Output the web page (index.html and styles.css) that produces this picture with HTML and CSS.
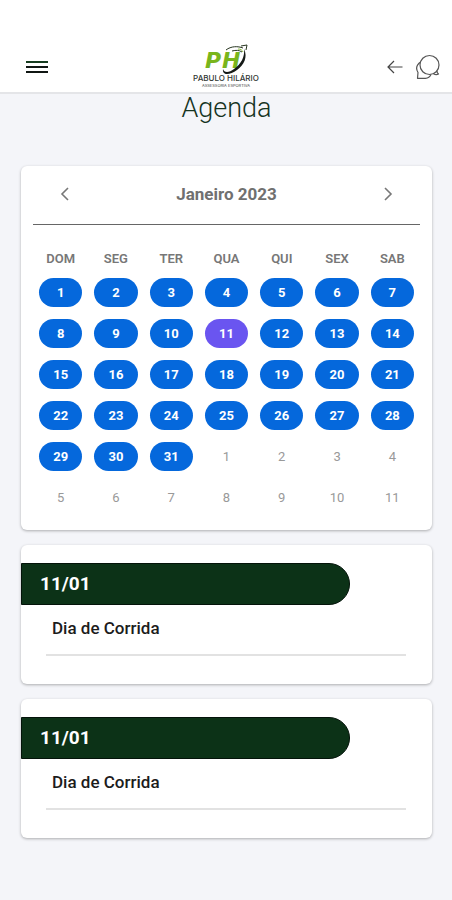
FILE: index.html
```html
<!DOCTYPE html>
<html lang="pt-BR">
<head>
<meta charset="utf-8">
<meta name="viewport" content="width=device-width, initial-scale=1">
<title>Agenda</title>
<link rel="stylesheet" href="styles.css">
</head>
<body>
<header class="topbar">
  <div class="topbar-side">
    <button class="icon-button" type="button" aria-label="Menu">
      <svg width="22" height="14" viewBox="0 0 22 14" fill="none" stroke-width="2"><path d="M0 2h22" stroke="#173d20"/><path d="M0 7h22M0 12h22" stroke="#101613"/></svg>
    </button>
  </div>
  <a class="logo" href="#" aria-label="Pabulo Hilário">
    <svg width="70" height="46" viewBox="0 0 70 46">
      <g class="logo-mark"><text x="14" y="24">P</text><text x="31" y="24">H</text></g>
      <path d="M32 25c1 4 6 4 11 0 7-5 11-12 10-20 4 8 0 16-7 21-7 5-15 6-14-1z" fill="#151a17"/>
      <path d="M35 6c5-4 12-4 17-2M41 7c4-1 7-1 10 1M50 2l6-1-1 5" fill="none" stroke="#27351f" stroke-width="1"/>
      <path d="M47 5c3 0 4 1 5 3" fill="none" stroke="#8bbd3b"/>
      <text class="logo-name" x="35" y="37" text-anchor="middle">PABULO HILÁRIO</text>
      <text class="logo-tag" x="35" y="43" text-anchor="middle">ASSESSORIA ESPORTIVA</text>
    </svg>
  </a>
  <div class="topbar-side topbar-actions">
    <button class="icon-button" type="button" aria-label="Voltar">
      <svg width="16" height="14" viewBox="0 0 16 14" fill="none" stroke="#444" stroke-width="1.2"><path d="M15.500 7H1M7 1L1 7l6 6"/></svg>
    </button>
    <button class="icon-button" type="button" aria-label="Mensagens">
      <svg width="26" height="26" viewBox="0 0 26 26" fill="none" stroke="#555" stroke-width="1.2" stroke-linejoin="round"><circle cx="14.500" cy="11" r="9.500"/><path d="M18.500 19.700c1.500 1 3.500 1.200 5 .3-1.200-.8-1.700-1.800-1.400-3.200M5.500 8C1.500 11 .8 15 3 18.500L2.500 24.300h8c2 0 4.500-1.500 5.500-3.700"/></svg>
    </button>
  </div>
</header>
<main class="page">
  <h1 class="title">Agenda</h1>
  <section class="card calendar" aria-label="Calendário">
    <div class="month-bar">
      <button class="icon-button" type="button" aria-label="Mês anterior"><svg width="10" height="14" viewBox="0 0 10 14" fill="none" stroke="#777" stroke-width="1.600"><path d="M8 1L2 7l6 6"/></svg></button>
      <h2 class="month">Janeiro 2023</h2>
      <button class="icon-button" type="button" aria-label="Próximo mês"><svg width="10" height="14" viewBox="0 0 10 14" fill="none" stroke="#777" stroke-width="1.600"><path d="M2 1l6 6-6 6"/></svg></button>
    </div>
    <table class="days">
      <thead><tr><th>DOM</th><th>SEG</th><th>TER</th><th>QUA</th><th>QUI</th><th>SEX</th><th>SAB</th></tr></thead>
      <tbody>
        <tr><td><button class="day">1</button></td><td><button class="day">2</button></td><td><button class="day">3</button></td><td><button class="day">4</button></td><td><button class="day">5</button></td><td><button class="day">6</button></td><td><button class="day">7</button></td></tr>
        <tr><td><button class="day">8</button></td><td><button class="day">9</button></td><td><button class="day">10</button></td><td><button class="day today" aria-current="date">11</button></td><td><button class="day">12</button></td><td><button class="day">13</button></td><td><button class="day">14</button></td></tr>
        <tr><td><button class="day">15</button></td><td><button class="day">16</button></td><td><button class="day">17</button></td><td><button class="day">18</button></td><td><button class="day">19</button></td><td><button class="day">20</button></td><td><button class="day">21</button></td></tr>
        <tr><td><button class="day">22</button></td><td><button class="day">23</button></td><td><button class="day">24</button></td><td><button class="day">25</button></td><td><button class="day">26</button></td><td><button class="day">27</button></td><td><button class="day">28</button></td></tr>
        <tr><td><button class="day">29</button></td><td><button class="day">30</button></td><td><button class="day">31</button></td><td><button class="day other">1</button></td><td><button class="day other">2</button></td><td><button class="day other">3</button></td><td><button class="day other">4</button></td></tr>
        <tr><td><button class="day other">5</button></td><td><button class="day other">6</button></td><td><button class="day other">7</button></td><td><button class="day other">8</button></td><td><button class="day other">9</button></td><td><button class="day other">10</button></td><td><button class="day other">11</button></td></tr>
      </tbody>
    </table>
  </section>
  <article class="card event">
    <h2 class="event-date">11/01</h2>
    <p class="event-name">Dia de Corrida</p>
  </article>
  <article class="card event">
    <h2 class="event-date">11/01</h2>
    <p class="event-name">Dia de Corrida</p>
  </article>
</main>
</body>
</html>
```
FILE: styles.css
```css
* {
  box-sizing: border-box;
}

body {
  margin: 0;
  background: #f4f5f9;
  color: #1c1c1c;
  font-family: Roboto, "Liberation Sans", sans-serif;
}

h1, h2, p {
  margin: 0;
}

button {
  padding: 0;
  border: 0;
  background: none;
  font-family: inherit;
  cursor: pointer;
}

.icon-button {
  display: flex;
  align-items: center;
  justify-content: center;
}

.topbar {
  display: grid;
  grid-template-columns: 1fr auto 1fr;
  align-items: center;
  padding: 44px 11px 2px;
  background: #fff;
  border-bottom: 2px solid #e4e5e8;
}

.topbar-side {
  display: flex;
  align-items: center;
  padding-left: 15px;
}

.topbar-actions {
  justify-content: flex-end;
  gap: 12px;
}

.logo {
  display: flex;
}

.logo-mark {
  font: italic 700 22px "DejaVu Sans", sans-serif;
  fill: #79b51c;
}

.logo-name {
  font: 500 8px Inter, sans-serif;
  fill: #303632;
}

.logo-tag {
  font: 400 4px Inter, sans-serif;
  fill: #444;
}

.page {
  display: flex;
  flex-direction: column;
  gap: 15px;
  padding: 0 20px 24px 21px;
}

.title {
  margin-bottom: 29px;
  color: #16341f;
  font-size: 27px;
  font-weight: 300;
  line-height: 28px;
  text-align: center;
}

.card {
  background: #fff;
  border-radius: 6px;
  box-shadow: 0 1px 3px rgba(0, 0, 0, 0.3);
}

.calendar {
  padding: 0 12px 12px;
}

.month-bar {
  display: flex;
  align-items: center;
  justify-content: space-between;
  height: 59px;
  padding: 0 27px 2px;
  border-bottom: 1px solid #666;
}

.month {
  color: #707070;
  font-size: 17px;
  font-weight: 700;
  line-height: 20px;
}

.days {
  width: 100%;
  margin-top: 20px;
  border-collapse: collapse;
  table-layout: fixed;
}

.days th {
  height: 27px;
  padding: 0;
  color: #777;
  font-size: 13px;
  font-weight: 600;
}

.days td {
  height: 41px;
  padding: 0 6px;
}

.day {
  display: block;
  width: 100%;
  height: 29px;
  border-radius: 15px;
  background: #0568dc;
  color: #fff;
  font-size: 13px;
  font-weight: 700;
}

.day.today {
  background: #6a55f0;
}

.day.other {
  background: none;
  color: #999;
  font-weight: 400;
}

.event {
  padding: 18px 0 28px;
}

.event-date {
  width: 80%;
  padding: 0 18px;
  border: 1px solid #04130a;
  border-radius: 0 21px 21px 0;
  background: #0c3217;
  color: #fff;
  font-size: 19px;
  font-weight: 700;
  line-height: 40px;
}

.event-name {
  margin: 0 26px 0 25px;
  padding: 13px 6px 16px;
  border-bottom: 2px solid #e2e2e2;
  font-size: 17px;
  font-weight: 500;
  line-height: 20px;
}
```
